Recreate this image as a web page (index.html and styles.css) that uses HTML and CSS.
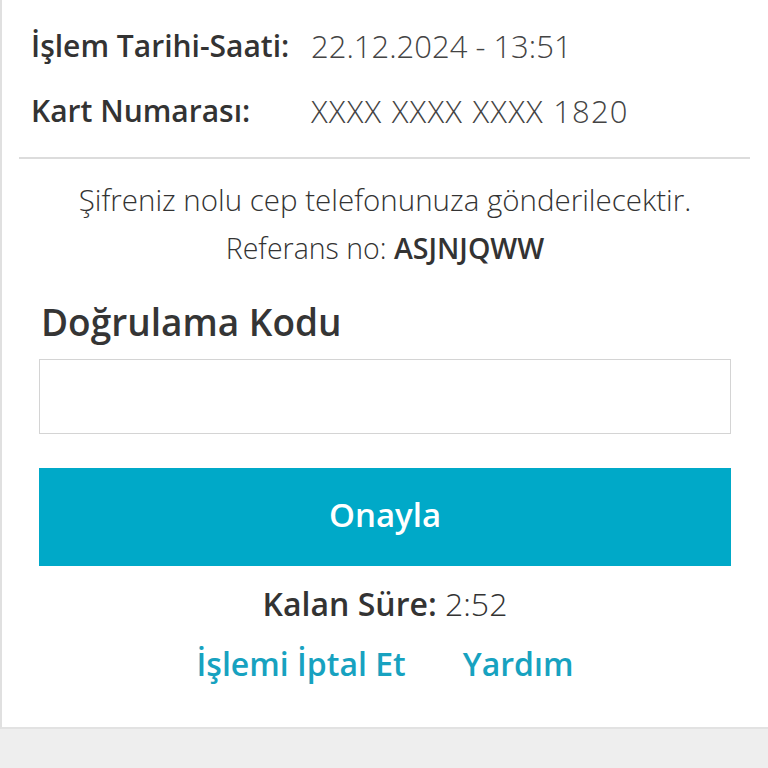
FILE: index.html
```html
<!DOCTYPE html>
<html lang="tr">
<head>
<meta charset="utf-8">
<link rel="stylesheet" href="styles.css">
</head>
<body>
<div class="card">
  <div class="info">
    <div class="row"><span class="label">İşlem Tarihi-Saati:</span><span class="value">22.12.2024 - 13:51</span></div>
    <div class="row"><span class="label">Kart Numarası:</span><span class="value card-no">XXXX XXXX XXXX 1820</span></div>
  </div>
  <hr class="divider">
  <p class="msg">Şifreniz nolu cep telefonunuza gönderilecektir.</p>
  <p class="ref">Referans no: <strong>ASJNJQWW</strong></p>
  <div class="form">
    <label class="field-label">Doğrulama Kodu</label>
    <input class="field" type="text">
    <button class="btn">Onayla</button>
    <p class="timer"><strong>Kalan Süre:</strong> 2:52</p>
    <div class="links"><a class="link">İşlemi İptal Et</a><a class="link">Yardım</a></div>
  </div>
</div>
</body>
</html>
```
FILE: styles.css
```css
html, body { margin: 0; padding: 0; }
body {
  background: #eeeeee;
  font-family: "Open Sans", Lato, sans-serif;
  color: #333;
  height: 768px;
}
.card {
  background: #fff;
  border-left: 2px solid #e0e0e0;
  border-bottom: 2px solid #e2e2e2;
  height: 729px;
  box-sizing: border-box;
  padding-top: 13px;
}
.info { padding-left: 29px; }
.row { display: flex; align-items: center; height: 65px; font-size: 30px; }
.label { width: 280px; font-weight: 600; color: #333; }
.value { font-weight: 300; color: #444; font-size: 31px; }
.card-no { letter-spacing: 1.2px; }
.divider {
  border: 0; border-top: 2px solid #dcdcdc;
  margin: 14px 18px 0 17px;
}
.msg, .ref {
  text-align: center; margin: 0; font-size: 28.5px; line-height: 40px; font-weight: 300; color: #333;
}
.msg { margin-top: 21px; font-size: 29.5px; }
.ref { margin-top: 8px; }
.ref strong { font-weight: 600; }
.form { padding: 0 37px 0 37px; }
.field-label {
  display: block; font-size: 37px; line-height: 48px; font-weight: 600; color: #353535;
  margin: 30px 0 0 2px;
}
.field {
  display: block; width: 100%; box-sizing: border-box; height: 75px;
  border: 1px solid #d4d4d4; margin: 13px 0 0; font-size: 26px;
}
.btn {
  display: block; width: 100%; height: 98px; margin-top: 34px; padding: 0 0 6px;
  background: #00a9c8; border: 0; color: #fff;
  font-family: inherit; font-size: 33px; font-weight: 600;
}
.timer { text-align: center; font-size: 32px; line-height: 40px; margin: 18px 0 0; font-weight: 300; }
.timer strong { font-weight: 600; }
.links { display: flex; justify-content: center; gap: 57px; margin-top: 20px; line-height: 40px; }
.link { color: #17a2c0; font-size: 32px; font-weight: 600; }
```
